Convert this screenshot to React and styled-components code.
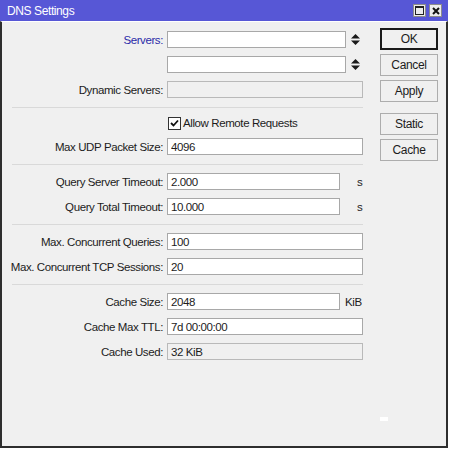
import styled, { createGlobalStyle } from 'styled-components';

const GlobalStyle = createGlobalStyle`
  html, body {
    margin: 0;
    padding: 0;
    background: #ffffff;
  }
  body {
    font-family: "Liberation Sans", Arial, sans-serif;
    font-size: 11.5px;
    letter-spacing: -0.4px;
    color: #1c1c1c;
  }
`;

const Window = styled.div`
  position: relative;
  width: 448px;
  height: 448px;
  display: flex;
  flex-direction: column;
`;

const TitleBar = styled.div`
  height: 21px;
  flex: 0 0 21px;
  background: #5757d6;
  display: flex;
  align-items: center;
  padding: 0 6px 0 7px;
`;

const Title = styled.div`
  flex: 1;
  color: #ffffff;
  font-size: 12px;
`;

const TitleButtons = styled.div`
  display: flex;
  gap: 3px;
`;

const TitleButton = styled.div`
  width: 13px;
  height: 13px;
  box-sizing: border-box;
  background: #ececec;
  border: 1px solid #8c8c8c;
  display: flex;
  align-items: center;
  justify-content: center;
`;

const MaxGlyph = styled.div`
  width: 9px;
  height: 9px;
  box-sizing: border-box;
  border: 1px solid #222222;
  border-top-width: 2px;
`;

const Body = styled.div`
  flex: 1;
  display: flex;
  gap: 17px;
  background: #f0f0f0;
  border: 2px solid #2e2e2e;
  border-top: 1px solid #ffffff;
`;

const Form = styled.div`
  width: 361px;
  display: flex;
  flex-direction: column;
  gap: 8px;
  padding-top: 9px;
`;

const Row = styled.div`
  display: grid;
  grid-template-columns: 161px 1fr;
  column-gap: 4px;
  align-items: center;
  height: ${p => p.$height || 17}px;
`;

const Label = styled.div`
  text-align: right;
  white-space: nowrap;
  color: ${p => (p.$accent ? '#2b2ba8' : '#1c1c1c')};
`;

const Field = styled.div`
  display: flex;
  align-items: center;
`;

const Input = styled.input`
  box-sizing: border-box;
  width: ${p => p.$width || 196}px;
  height: 17px;
  margin: 0;
  padding: 0 3px;
  border: 1px solid ${p => (p.disabled ? '#b9b9b9' : '#a8a8a8')};
  background: ${p => (p.disabled ? '#f0f0f0' : '#ffffff')};
  font-family: inherit;
  font-size: 11.5px;
  letter-spacing: -0.4px;
  color: #1c1c1c;
  outline: none;
  &:disabled {
    color: #1c1c1c;
    -webkit-text-fill-color: #1c1c1c;
    opacity: 1;
  }
`;

const Unit = styled.span`
  margin-left: ${p => p.$gap || 5}px;
`;

const SpinIcon = styled.svg`
  margin-left: 5px;
  width: 9px;
  height: 11px;
  display: block;
`;

const Separator = styled.div`
  margin: 1px 0 0 10px;
  height: 1px;
  background: #d9d9d9;
`;

const CheckField = styled.label`
  display: flex;
  align-items: center;
  gap: 2px;
  padding-left: 1px;
`;

const CheckBox = styled.span`
  box-sizing: border-box;
  width: 13px;
  height: 13px;
  border: 1px solid #333333;
  background: #ffffff;
  display: flex;
  align-items: center;
  justify-content: center;
`;

const ButtonColumn = styled.div`
  width: 58px;
  display: flex;
  flex-direction: column;
  gap: 4px;
  padding-top: 6px;
`;

const Button = styled.button`
  box-sizing: border-box;
  height: 22px;
  margin: 0;
  margin-top: ${p => (p.$spaced ? 7 : 0)}px;
  padding: 0;
  background: #f0f0f0;
  border: 1px solid ${p => (p.$primary ? '#1a1a1a' : '#adadad')};
  box-shadow: ${p => (p.$primary ? 'inset 0 0 0 1px #1a1a1a' : 'none')};
  font-family: inherit;
  font-size: 12px;
  letter-spacing: -0.35px;
  color: #1c1c1c;
`;

const Cursor = styled.div`
  position: absolute;
  left: 380px;
  top: 417px;
  width: 8px;
  height: 4px;
  background: #ffffff;
`;

const Spinner = () => (
  <SpinIcon viewBox="0 0 9 11">
    <path d="M4.5 0 L9 4.5 H0 Z M0 6.5 H9 L4.5 11 Z" fill="#1a1a1a" />
  </SpinIcon>
);

const FieldRow = ({ label, accent, children }) => (
  <Row>
    <Label $accent={accent}>{label}</Label>
    <Field>{children}</Field>
  </Row>
);

export default function App() {
  return (
    <>
      <GlobalStyle />
      <Window>
        <TitleBar>
          <Title>DNS Settings</Title>
          <TitleButtons>
            <TitleButton>
              <MaxGlyph />
            </TitleButton>
            <TitleButton>
              <svg width="8" height="8" viewBox="0 0 8 8">
                <path d="M1 1 L7 7 M7 1 L1 7" stroke="#111" strokeWidth="2" />
              </svg>
            </TitleButton>
          </TitleButtons>
        </TitleBar>
        <Body>
          <Form>
            <FieldRow label="Servers:" accent>
              <Input $width={179} readOnly defaultValue="" />
              <Spinner />
            </FieldRow>
            <FieldRow label="">
              <Input $width={179} readOnly defaultValue="" />
              <Spinner />
            </FieldRow>
            <FieldRow label="Dynamic Servers:">
              <Input disabled defaultValue="" />
            </FieldRow>
            <Separator />
            <Row $height={14}>
              <span />
              <CheckField>
                <CheckBox>
                  <svg width="9" height="8" viewBox="0 0 9 8">
                    <path d="M1 4 L3.5 6.5 L8 1.5" stroke="#111" strokeWidth="1.8" fill="none" />
                  </svg>
                </CheckBox>
                Allow Remote Requests
              </CheckField>
            </Row>
            <FieldRow label="Max UDP Packet Size:">
              <Input readOnly defaultValue="4096" />
            </FieldRow>
            <Separator />
            <FieldRow label="Query Server Timeout:">
              <Input $width={173} readOnly defaultValue="2.000" />
              <Unit $gap={17}>s</Unit>
            </FieldRow>
            <FieldRow label="Query Total Timeout:">
              <Input $width={173} readOnly defaultValue="10.000" />
              <Unit $gap={17}>s</Unit>
            </FieldRow>
            <Separator />
            <FieldRow label="Max. Concurrent Queries:">
              <Input readOnly defaultValue="100" />
            </FieldRow>
            <FieldRow label="Max. Concurrent TCP Sessions:">
              <Input readOnly defaultValue="20" />
            </FieldRow>
            <Separator />
            <FieldRow label="Cache Size:">
              <Input $width={173} readOnly defaultValue="2048" />
              <Unit>KiB</Unit>
            </FieldRow>
            <FieldRow label="Cache Max TTL:">
              <Input readOnly defaultValue="7d 00:00:00" />
            </FieldRow>
            <FieldRow label="Cache Used:">
              <Input disabled defaultValue="32 KiB" />
            </FieldRow>
          </Form>
          <ButtonColumn>
            <Button $primary>OK</Button>
            <Button>Cancel</Button>
            <Button>Apply</Button>
            <Button $spaced>Static</Button>
            <Button>Cache</Button>
          </ButtonColumn>
        </Body>
        <Cursor />
      </Window>
    </>
  );
}
